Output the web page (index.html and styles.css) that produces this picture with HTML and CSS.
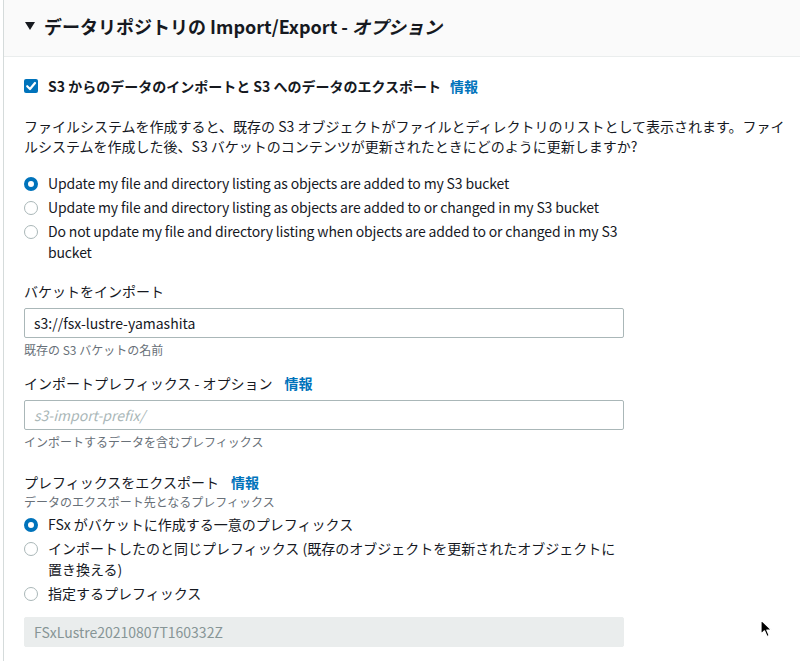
FILE: index.html
```html
<!DOCTYPE html>
<html lang="ja">
<head>
<meta charset="utf-8">
<title>データリポジトリの Import/Export</title>
<link rel="stylesheet" href="styles.css">
</head>
<body>
<section class="panel">
  <header class="panel-header">
    <svg class="caret" width="10" height="8" viewBox="0 0 10 8"><path d="M0 0 H10 L5 8 Z" fill="#16191f"/></svg>
    <h2 class="panel-title">データリポジトリの Import/Export - <i>オプション</i></h2>
  </header>
  <div class="panel-body">
    <div class="check-row">
      <span class="checkbox"><svg width="14" height="14" viewBox="0 0 14 14"><path d="M3.2 7.2 L6 10 L11 4" fill="none" stroke="#fff" stroke-width="2.2" stroke-linecap="round" stroke-linejoin="round"/></svg></span>
      <span class="check-label">S3 からのデータのインポートと S3 へのデータのエクスポート</span>
      <a class="info info-check">情報</a>
    </div>
    <p class="desc">ファイルシステムを作成すると、既存の S3 オブジェクトがファイルとディレクトリのリストとして表示されます。ファイルシステムを作成した後、S3 バケットのコンテンツが更新されたときにどのように更新しますか?</p>
    <div class="radio-group first-group">
      <div class="radio-item"><span class="radio checked"></span><span class="radio-label">Update my file and directory listing as objects are added to my S3 bucket</span></div>
      <div class="radio-item"><span class="radio"></span><span class="radio-label">Update my file and directory listing as objects are added to or changed in my S3 bucket</span></div>
      <div class="radio-item"><span class="radio"></span><span class="radio-label">Do not update my file and directory listing when objects are added to or changed in my S3 bucket</span></div>
    </div>

    <div class="field field-bucket">
      <div class="field-label">バケットをインポート</div>
      <div class="input">s3://fsx-lustre-yamashita</div>
      <div class="help">既存の S3 バケットの名前</div>
    </div>

    <div class="field field-import">
      <div class="field-label">インポートプレフィックス - オプション<a class="info">情報</a></div>
      <div class="input placeholder">s3-import-prefix/</div>
      <div class="help">インポートするデータを含むプレフィックス</div>
    </div>

    <div class="field field-export">
      <div class="field-label">プレフィックスをエクスポート<a class="info">情報</a></div>
      <div class="help desc-help">データのエクスポート先となるプレフィックス</div>
      <div class="radio-group">
        <div class="radio-item"><span class="radio checked"></span><span class="radio-label">FSx がバケットに作成する一意のプレフィックス</span></div>
        <div class="radio-item"><span class="radio"></span><span class="radio-label">インポートしたのと同じプレフィックス (既存のオブジェクトを更新されたオブジェクトに置き換える)</span></div>
        <div class="radio-item"><span class="radio"></span><span class="radio-label">指定するプレフィックス</span></div>
      </div>
      <div class="input disabled">FSxLustre20210807T160332Z</div>
    </div>
  </div>
</section>
<svg class="cursor" width="14" height="20" viewBox="0 0 14 20"><path d="M1 1 L1 15 L4.5 11.8 L7 17.5 L9.2 16.5 L6.8 11 L11.5 11 Z" fill="#000" stroke="#fff" stroke-width="1.2" stroke-linejoin="round"/></svg>
</body>
</html>
```
FILE: styles.css
```css
html, body {
  margin: 0;
  padding: 0;
  background: #fff;
}
body {
  font-family: "Noto Sans CJK JP", "Noto Sans", sans-serif;
  font-size: 14px;
  color: #16191f;
  width: 800px;
  height: 661px;
  overflow: hidden;
  position: relative;
}
.panel {
  margin-left: 3px;
  border-left: 1px solid #d5dbdb;
  height: 661px;
}
.panel-header {
  height: 57px;
  box-sizing: border-box;
  padding-bottom: 5px;
  background: #fafafa;
  border-bottom: 1px solid #eaeded;
  display: flex;
  align-items: center;
  padding-left: 21px;
}
.caret {
  margin-right: 9px;
  margin-top: 1px;
}
.panel-title {
  margin: 0;
  font-size: 18px;
  font-weight: 700;
  line-height: 24px;
}
.panel-title i {
  font-style: italic;
}
.panel-body {
  padding: 18px 20px 0 20px;
}
.check-row {
  display: flex;
  align-items: center;
  height: 22px;
}
.checkbox {
  width: 14px;
  height: 14px;
  border-radius: 2px;
  background: #0073bb;
  display: inline-flex;
  margin-right: 10px;
}
.check-label {
  font-weight: 700;
}
.info {
  color: #0073bb;
  font-weight: 700;
  margin-left: 12px;
  text-decoration: none;
}
.info-check {
  margin-left: 9px;
}
.desc {
  margin: 19px 0 0 0;
  line-height: 20px;
  width: 768px;
}
.radio-group {
  display: flex;
  flex-direction: column;
  gap: 3px;
}
.first-group {
  margin-top: 17px;
  width: 600px;
  letter-spacing: -0.15px;
}
.radio-item {
  display: flex;
  align-items: flex-start;
  line-height: 21px;
}
.radio {
  flex: none;
  width: 14px;
  height: 14px;
  box-sizing: border-box;
  border-radius: 50%;
  border: 1px solid #aab7b8;
  background: #fff;
  margin-top: 4px;
  margin-right: 10px;
}
.radio.checked {
  border: 4px solid #0073bb;
}
.field-bucket {
  margin-top: 17px;
}
.field-import {
  margin-top: 14px;
}
.field-export {
  margin-top: 21px;
}
.field-label {
  line-height: 22px;
  margin-bottom: 6px;
}
.field-export .field-label {
  margin-bottom: 0;
}
.input {
  width: 600px;
  height: 30px;
  box-sizing: border-box;
  border: 1px solid #aab7b8;
  border-radius: 2px;
  padding: 0 9px;
  line-height: 28px;
}
.input.placeholder {
  color: #aab7b8;
  font-style: italic;
}
.input.disabled {
  margin-top: 13px;
  background: #eaeded;
  border-color: #eaeded;
  color: #879596;
}
.help {
  font-size: 12px;
  line-height: 16px;
  color: #687078;
  margin-top: 4px;
}
.desc-help {
  margin-top: 1px;
  margin-bottom: 4px;
}
.field-export .radio-group {
  width: 600px;
}
.cursor {
  position: absolute;
  left: 760px;
  top: 619px;
}
```
